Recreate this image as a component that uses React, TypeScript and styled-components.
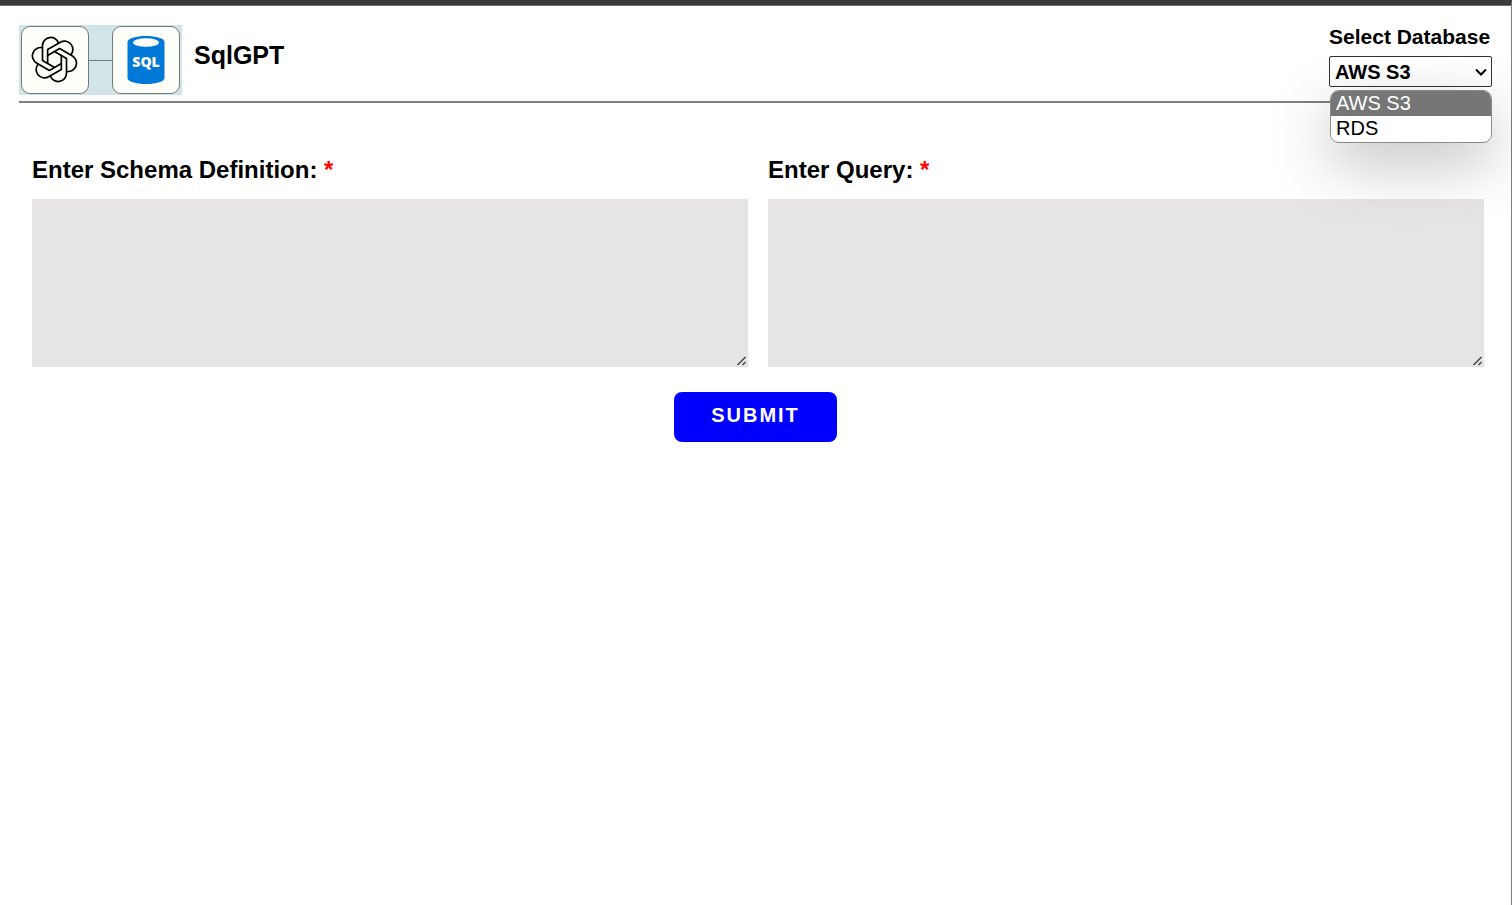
import React, { useState } from "react";
import styled, { createGlobalStyle } from "styled-components";

const GlobalStyle = createGlobalStyle`
  * { box-sizing: border-box; }
  body {
    margin: 0;
    background: #fff;
    color: #000;
    font-family: "Liberation Sans", Arial, sans-serif;
  }
`;

const Page = styled.div`
  min-height: 100vh;
  border-top: 5px solid #3b3b3b;
  border-right: 1px solid #7d7d7d;
  box-shadow: inset 0 1px 0 #6f6f6f;
`;

const Header = styled.header`
  display: flex;
  justify-content: space-between;
  margin: 0 19px;
  padding: 20px 0 6px;
  border-bottom: 2px solid #808080;
`;

const Brand = styled.div`
  display: flex;
  align-items: flex-start;
  gap: 12px;
`;

const Logo = styled.div`
  display: flex;
  align-items: center;
  width: 163px;
  height: 70px;
  padding: 0 2px;
  background: #d1e5e7;
`;

const LogoTile = styled.div`
  display: flex;
  align-items: center;
  justify-content: center;
  width: 68px;
  height: 68px;
  border: 1px solid #6f7c7c;
  border-radius: 9px;
  background: #fffffa;
`;

const LogoLink = styled.div`
  flex: 1;
  height: 1px;
  background: #6d7f80;
`;

const BrandName = styled.h1`
  margin: 0;
  padding-top: 16px;
  font-size: 25px;
  line-height: 29px;
`;

const DatabaseField = styled.div`
  position: relative;
  display: flex;
  flex-direction: column;
  width: 163px;
  height: 70px;
`;

const DatabaseLabel = styled.label`
  margin-bottom: 7px;
  font-size: 21px;
  font-weight: bold;
  line-height: 24px;
  white-space: nowrap;
`;

const SelectBox = styled.div`
  position: relative;
`;

const DatabaseSelect = styled.select`
  display: block;
  appearance: none;
  width: 100%;
  height: 31px;
  padding: 0 24px 0 5px;
  border: 1px solid #333;
  border-radius: 2px;
  background-color: #fff;
  color: #000;
  font: bold 20px "Liberation Sans", Arial, sans-serif;
`;

const SelectArrow = styled.svg`
  position: absolute;
  top: 12px;
  right: 5px;
  pointer-events: none;
`;

const OptionMenu = styled.ul`
  position: absolute;
  top: 65px;
  left: 1px;
  right: 0;
  z-index: 1;
  margin: 0;
  padding: 0 0 1px;
  overflow: hidden;
  border: 1px solid #8a8a8a;
  border-radius: 9px;
  background: #fff;
  box-shadow: 0 20px 60px rgba(0, 0, 0, 0.25);
  list-style: none;
`;

const OptionItem = styled.li<{ $active: boolean }>`
  padding: 0 5px;
  background: ${({ $active }) => ($active ? "#767676" : "#fff")};
  color: ${({ $active }) => ($active ? "#fff" : "#000")};
  font-size: 20px;
  line-height: 25px;
  cursor: default;
`;

const Form = styled.form`
  display: flex;
  flex-direction: column;
  align-items: center;
  gap: 25px;
  padding: 53px 0 40px;
`;

const Fields = styled.div`
  display: grid;
  grid-template-columns: 1fr 1fr;
  gap: 20px;
  width: 100%;
  padding: 0 27px 0 32px;
`;

const Field = styled.div`
  display: flex;
  flex-direction: column;
  gap: 15px;
`;

const FieldLabel = styled.label`
  font-size: 24px;
  font-weight: bold;
  line-height: 28px;
`;

const Required = styled.span`
  color: #f00;
`;

const TextArea = styled.textarea`
  display: block;
  width: 100%;
  height: 168px;
  padding: 10px;
  border: 0;
  background: #e6e4e5;
  font: 20px "Liberation Sans", Arial, sans-serif;
  resize: both;

  &::-webkit-resizer {
    background: url("data:image/svg+xml,%3Csvg xmlns='http://www.w3.org/2000/svg' width='15' height='15'%3E%3Cpath d='M4.5 13L12.5 5M9.5 13L12.5 10' stroke='%23444' stroke-width='1.5'/%3E%3C/svg%3E")
      no-repeat right bottom;
  }
`;

const SubmitButton = styled.button`
  width: 163px;
  height: 50px;
  padding: 0 0 4px;
  border: 0;
  border-radius: 8px;
  background: #00f;
  color: #fff;
  font: bold 20px "Liberation Sans", Arial, sans-serif;
  letter-spacing: 2px;
  cursor: pointer;
`;

const databases = ["AWS S3", "RDS"];

const fields = [
  { id: "schema", label: "Enter Schema Definition:" },
  { id: "query", label: "Enter Query:" },
];

const strandAngles = [0, 60, 120, 180, 240, 300];

/* One strand of the knot, repeated around the centre. */
function KnotIcon() {
  return (
    <svg width="48" height="48" viewBox="-23.5 -23.5 48 48" fill="none" stroke="#000" strokeWidth="1.7" aria-hidden>
      {strandAngles.map((angle) => (
        <path
          key={angle}
          d="M4.2 -16.3A8.3 8.3 0 0 0 -12 -13.8V1L0 7.9"
          strokeLinejoin="round"
          transform={`rotate(${angle})`}
        />
      ))}
    </svg>
  );
}

function DatabaseIcon() {
  return (
    <svg width="38" height="50" viewBox="0 0 38 50" role="img" aria-label="SQL database">
      <path d="M0.5 7C0.5 3.5 8.5 1 19 1S37.5 3.5 37.5 7V43C37.5 46.5 29.5 49 19 49S0.5 46.5 0.5 43Z" fill="#0078d7" />
      <ellipse cx="19" cy="7.5" rx="13" ry="4.3" fill="#fffffa" />
      <text
        x="19"
        y="32"
        textAnchor="middle"
        fill="#fff"
        fontFamily='"Open Sans", "Noto Sans", sans-serif'
        fontSize="14"
        fontWeight="800"
      >
        SQL
      </text>
    </svg>
  );
}

export default function App() {
  const [database, setDatabase] = useState(databases[0]);

  return (
    <Page>
      <GlobalStyle />
      <Header>
        <Brand>
          <Logo>
            <LogoTile>
              <KnotIcon />
            </LogoTile>
            <LogoLink />
            <LogoTile>
              <DatabaseIcon />
            </LogoTile>
          </Logo>
          <BrandName>SqlGPT</BrandName>
        </Brand>
        <DatabaseField>
          <DatabaseLabel htmlFor="database">Select Database</DatabaseLabel>
          <SelectBox>
            <DatabaseSelect
              id="database"
              value={database}
              onChange={(event) => setDatabase(event.target.value)}
            >
              {databases.map((name) => (
                <option key={name}>{name}</option>
              ))}
            </DatabaseSelect>
            <SelectArrow width="12" height="8" viewBox="0 0 12 8" aria-hidden>
              <path d="M1 1.5L6 6.5L11 1.5" fill="none" stroke="#000" strokeWidth="2" />
            </SelectArrow>
          </SelectBox>
          <OptionMenu role="listbox" aria-label="Select Database">
            {databases.map((name) => (
              <OptionItem
                key={name}
                role="option"
                aria-selected={name === database}
                $active={name === database}
                onClick={() => setDatabase(name)}
              >
                {name}
              </OptionItem>
            ))}
          </OptionMenu>
        </DatabaseField>
      </Header>
      <Form onSubmit={(event) => event.preventDefault()}>
        <Fields>
          {fields.map(({ id, label }) => (
            <Field key={id}>
              <FieldLabel htmlFor={id}>
                {label} <Required>*</Required>
              </FieldLabel>
              <TextArea id={id} required />
            </Field>
          ))}
        </Fields>
        <SubmitButton type="submit">SUBMIT</SubmitButton>
      </Form>
    </Page>
  );
}
